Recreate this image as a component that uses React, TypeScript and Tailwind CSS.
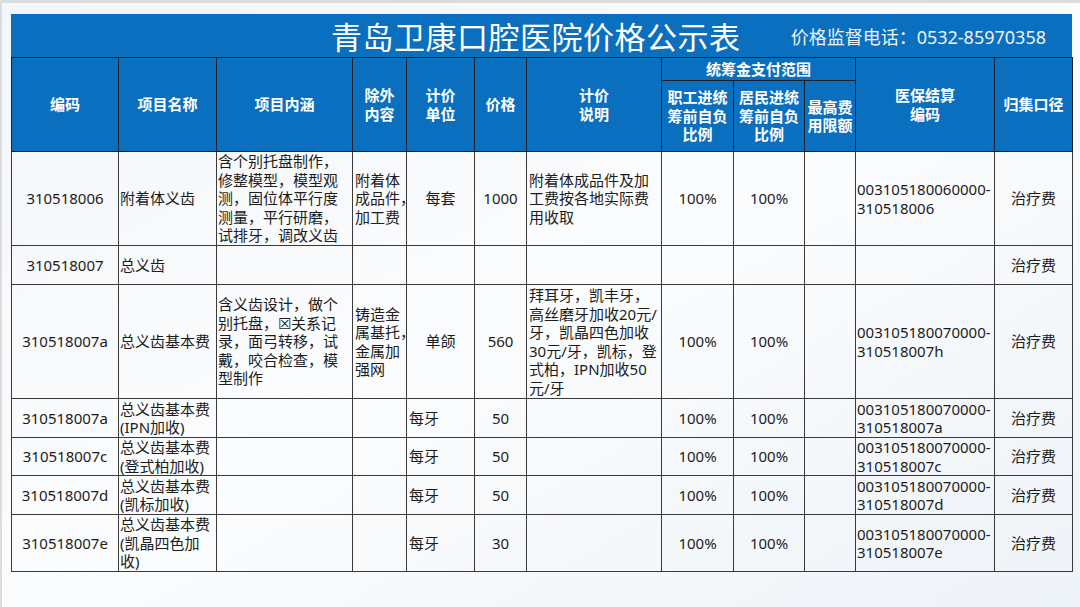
import React from 'react';

type Row = {
  code: string;
  name: string[];
  content: string[];
  excl: string[];
  unit: string;
  unitLeft?: boolean;
  price: string;
  note: string[];
  p1: string;
  p2: string;
  yb: string[];
  cat: string;
  h: string;
};

const rows: Row[] = [
  {
    code: '310518006',
    name: ['附着体义齿'],
    content: ['含个别托盘制作，', '修整模型，模型观', '测，固位体平行度', '测量，平行研磨，', '试排牙，调改义齿'],
    excl: ['附着体', '成品件，', '加工费'],
    unit: '每套',
    price: '1000',
    note: ['附着体成品件及加', '工费按各地实际费', '用收取'],
    p1: '100%',
    p2: '100%',
    yb: ['003105180060000-', '310518006'],
    cat: '治疗费',
    h: 'h-[94px]',
  },
  {
    code: '310518007',
    name: ['总义齿'],
    content: [],
    excl: [],
    unit: '',
    price: '',
    note: [],
    p1: '',
    p2: '',
    yb: [],
    cat: '治疗费',
    h: 'h-[39px]',
  },
  {
    code: '310518007a',
    name: ['总义齿基本费'],
    content: ['含义齿设计，做个', '别托盘，☒关系记', '录，面弓转移，试', '戴，咬合检查，模', '型制作'],
    excl: ['铸造金', '属基托，', '金属加', '强网'],
    unit: '单颌',
    price: '560',
    note: ['拜耳牙，凯丰牙，', '高丝磨牙加收20元/', '牙，凯晶四色加收', '30元/牙，凯标，登', '式柏，IPN加收50', '元/牙'],
    p1: '100%',
    p2: '100%',
    yb: ['003105180070000-', '310518007h'],
    cat: '治疗费',
    h: 'h-[114px]',
  },
  {
    code: '310518007a',
    name: ['总义齿基本费', '(IPN加收)'],
    content: [],
    excl: [],
    unit: '每牙',
    unitLeft: true,
    price: '50',
    note: [],
    p1: '100%',
    p2: '100%',
    yb: ['003105180070000-', '310518007a'],
    cat: '治疗费',
    h: 'h-[39px]',
  },
  {
    code: '310518007c',
    name: ['总义齿基本费', '(登式柏加收)'],
    content: [],
    excl: [],
    unit: '每牙',
    unitLeft: true,
    price: '50',
    note: [],
    p1: '100%',
    p2: '100%',
    yb: ['003105180070000-', '310518007c'],
    cat: '治疗费',
    h: 'h-[38px]',
  },
  {
    code: '310518007d',
    name: ['总义齿基本费', '(凯标加收)'],
    content: [],
    excl: [],
    unit: '每牙',
    unitLeft: true,
    price: '50',
    note: [],
    p1: '100%',
    p2: '100%',
    yb: ['003105180070000-', '310518007d'],
    cat: '治疗费',
    h: 'h-[39px]',
  },
  {
    code: '310518007e',
    name: ['总义齿基本费', '(凯晶四色加', '收)'],
    content: [],
    excl: [],
    unit: '每牙',
    unitLeft: true,
    price: '30',
    note: [],
    p1: '100%',
    p2: '100%',
    yb: ['003105180070000-', '310518007e'],
    cat: '治疗费',
    h: 'h-[57px]',
  },
];

function Lines({ lines }: { lines: string[] }) {
  return (
    <>
      {lines.map((l, i) => (
        <React.Fragment key={i}>
          {i > 0 && <br />}
          {l}
        </React.Fragment>
      ))}
    </>
  );
}

const th = 'border border-[#14202c] bg-[#0a6fbf] text-white font-bold text-center align-middle p-0';
const td = 'border border-[#3a3a3a] align-middle p-0 whitespace-nowrap';

export default function App() {
  return (
    <div className="w-[1080px] h-[607px] overflow-hidden border-t-[3px] border-l-[2px] border-[#dcdcdc] bg-gradient-to-br from-[#f3f6fa] via-[#fbfcfd] to-[#eef3f8] font-['Noto_Sans','Noto_Sans_CJK_SC',sans-serif] text-[#1c1c1c]">
      <div className="ml-[9px] mt-[11px] w-[1061px]">
        <div className="flex h-[43px] items-center justify-between bg-[#0a6fbf] pl-[320px] pr-[26px] pt-[3px]">
          <span className="text-[31px] leading-none tracking-[0.5px] text-white">青岛卫康口腔医院价格公示表</span>
          <span className="text-[18px] leading-none text-[#eef3f9]">价格监督电话：0532-85970358</span>
        </div>
        <table className="w-[1061px] table-fixed border-collapse text-[15px] leading-[18.5px]">
          <colgroup>
            <col className="w-[107px]" />
            <col className="w-[98px]" />
            <col className="w-[136px]" />
            <col className="w-[54px]" />
            <col className="w-[68px]" />
            <col className="w-[52px]" />
            <col className="w-[135px]" />
            <col className="w-[72px]" />
            <col className="w-[71px]" />
            <col className="w-[51px]" />
            <col className="w-[139px]" />
            <col className="w-[78px]" />
          </colgroup>
          <thead>
            <tr className="h-[23px]">
              <th rowSpan={2} className={th}>编码</th>
              <th rowSpan={2} className={th}>项目名称</th>
              <th rowSpan={2} className={th}>项目内涵</th>
              <th rowSpan={2} className={th}>除外<br />内容</th>
              <th rowSpan={2} className={th}>计价<br />单位</th>
              <th rowSpan={2} className={th}>价格</th>
              <th rowSpan={2} className={th}>计价<br />说明</th>
              <th colSpan={3} className={th}>统筹金支付范围</th>
              <th rowSpan={2} className={th}>医保结算<br />编码</th>
              <th rowSpan={2} className={th}>归集口径</th>
            </tr>
            <tr className="h-[71px]">
              <th className={th}>职工进统<br />筹前自负<br />比例</th>
              <th className={th}>居民进统<br />筹前自负<br />比例</th>
              <th className={`${th} whitespace-nowrap`}>最高费<br />用限额</th>
            </tr>
          </thead>
          <tbody>
            {rows.map((r, i) => (
              <tr key={i} className={r.h}>
                <td className={`${td} text-center`}>{r.code}</td>
                <td className={`${td} pl-[1px]`}><Lines lines={r.name} /></td>
                <td className={`${td} pl-[1px]`}><Lines lines={r.content} /></td>
                <td className={`${td} pl-[2px]`}><Lines lines={r.excl} /></td>
                <td className={`${td} ${r.unitLeft ? 'pl-[2px]' : 'text-center'}`}>{r.unit}</td>
                <td className={`${td} text-center`}>{r.price}</td>
                <td className={`${td} pl-[2px]`}><Lines lines={r.note} /></td>
                <td className={`${td} text-center`}>{r.p1}</td>
                <td className={`${td} text-center`}>{r.p2}</td>
                <td className={td}></td>
                <td className={`${td} pl-[1px]`}><Lines lines={r.yb} /></td>
                <td className={`${td} text-center`}>{r.cat}</td>
              </tr>
            ))}
          </tbody>
        </table>
      </div>
    </div>
  );
}
